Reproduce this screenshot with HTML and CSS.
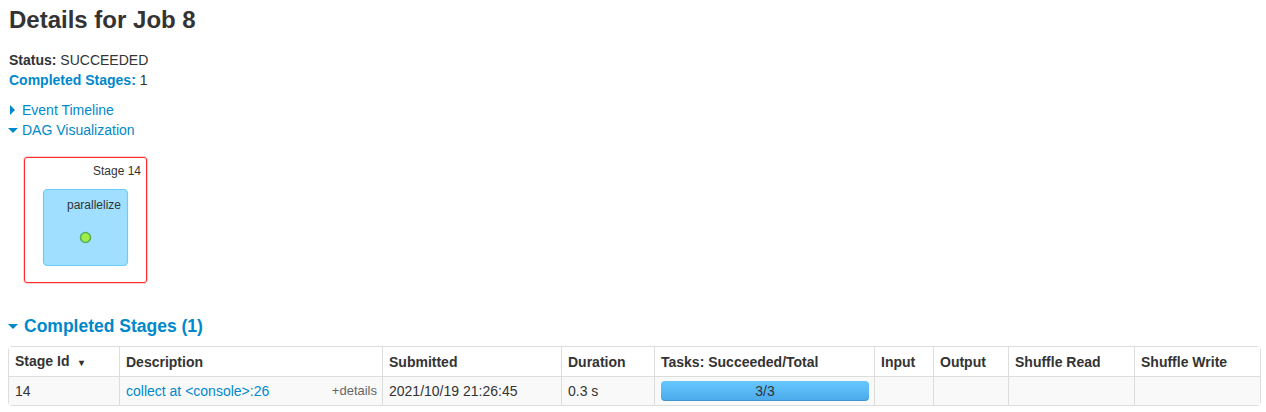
FILE: index.html
```html
<!DOCTYPE html>
<html>
<head>
<meta charset="utf-8">
<link rel="stylesheet" href="styles.css">
</head>
<body>
<div class="page">
  <h3 class="title">Details for Job 8</h3>
  <ul class="summary">
    <li><strong>Status:</strong> SUCCEEDED</li>
    <li><a class="link"><strong>Completed Stages:</strong></a> 1</li>
  </ul>
  <div class="toggles">
    <div class="toggle"><span class="arrow-right"></span><a class="link">Event Timeline</a></div>
    <div class="toggle"><span class="arrow-down"></span><a class="link">DAG Visualization</a></div>
  </div>
  <div class="dag">
    <svg width="150" height="140" viewBox="0 0 150 140">
      <rect x="24.5" y="9.5" width="122" height="125" rx="3" ry="3" fill="none" stroke="#ffd0d4" stroke-width="3"/>
      <rect x="24.5" y="9.5" width="122" height="125" rx="2.5" ry="2.5" fill="#fff" stroke="#ff2a2a" stroke-width="1"/>
      <text x="141" y="27" text-anchor="end" class="svg-label">Stage 14</text>
      <rect x="43.5" y="41.5" width="84" height="76" rx="4" ry="4" fill="#a0dfff" stroke="#68cdf7" stroke-width="1.2"/>
      <text x="121" y="61" text-anchor="end" class="svg-label">parallelize</text>
      <circle cx="85.5" cy="89.5" r="5" fill="#a4ec4a" stroke="#52b05a" stroke-width="1.6"/>
    </svg>
  </div>
  <h4 class="section"><span class="arrow-down big"></span>Completed Stages (1)</h4>
  <table class="stages">
    <colgroup>
      <col class="c1"><col class="c2"><col class="c3"><col class="c4"><col class="c5"><col class="c6"><col class="c7"><col class="c8"><col>
    </colgroup>
    <thead>
      <tr>
        <th>Stage Id <span class="sort">&#9662;</span></th>
        <th>Description</th>
        <th>Submitted</th>
        <th>Duration</th>
        <th>Tasks: Succeeded/Total</th>
        <th>Input</th>
        <th>Output</th>
        <th>Shuffle Read</th>
        <th>Shuffle Write</th>
      </tr>
    </thead>
    <tbody>
      <tr>
        <td>14</td>
        <td><div class="desc"><a class="link">collect at &lt;console&gt;:26</a><span class="details">+details</span></div></td>
        <td>2021/10/19 21:26:45</td>
        <td>0.3 s</td>
        <td><div class="progress"><span>3/3</span></div></td>
        <td></td>
        <td></td>
        <td></td>
        <td></td>
      </tr>
    </tbody>
  </table>
</div>
</body>
</html>
```
FILE: styles.css
```css
html, body {
  margin: 0;
  padding: 0;
  background: #fff;
}
body {
  font-family: "Liberation Sans", Arial, sans-serif;
  font-size: 14px;
  line-height: 20px;
  color: #333;
}
.page {
  padding: 0 5px 0 9px;
}
.title {
  margin: 0;
  font-size: 24px;
  line-height: 40px;
  font-weight: bold;
  color: #333;
}
.summary {
  list-style: none;
  margin: 10px 0 0 0;
  padding: 0;
}
.link {
  color: #0088cc;
  text-decoration: none;
}
.toggles {
  margin-top: 10px;
}
.toggle {
  display: flex;
  align-items: center;
  height: 20px;
}
.arrow-right {
  width: 0;
  height: 0;
  border-top: 5px solid transparent;
  border-bottom: 5px solid transparent;
  border-left: 5px solid #0088cc;
  margin: 0 7px 0 1px;
}
.arrow-down {
  width: 0;
  height: 0;
  border-left: 5px solid transparent;
  border-right: 5px solid transparent;
  border-top: 5px solid #0088cc;
  margin: 0 4px 0 -1px;
}
.arrow-down.big {
  margin: 0 6px 0 -1px;
}
.dag {
  height: 148px;
}
.dag svg {
  display: block;
  margin-left: -9px;
  margin-top: 8px;
}
.svg-label {
  font-family: "Liberation Sans", Arial, sans-serif;
  font-size: 12px;
  fill: #333;
}
.section {
  display: flex;
  align-items: center;
  margin: 20px 0 10px 0;
  font-size: 17.5px;
  line-height: 20px;
  font-weight: bold;
  color: #0088cc;
}
.stages {
  width: 1253px;
  table-layout: fixed;
  border-collapse: separate;
  border-spacing: 0;
  border: 1px solid #ddd;
  border-radius: 4px;
  font-size: 14px;
  margin-left: -1px;
}
.c1 { width: 110px; }
.c2 { width: 263px; }
.c3 { width: 179px; }
.c4 { width: 93px; }
.c5 { width: 220px; }
.c6 { width: 59px; }
.c7 { width: 75px; }
.c8 { width: 126px; }
.stages th, .stages td {
  text-align: left;
  padding: 4px 6px 3px 6px;
  height: 20px;
  line-height: 20px;
  border-left: 1px solid #ddd;
  vertical-align: middle;
  box-sizing: content-box;
}
.stages th:first-child, .stages td:first-child {
  border-left: none;
}
.stages th {
  font-weight: bold;
  background: #fff;
}
.stages td {
  border-top: 1px solid #ddd;
  background: #f9f9f9;
  padding: 4px 6px;
}
.sort {
  font-size: 10px;
  margin-left: 6px;
}
.desc {
  display: flex;
  justify-content: space-between;
  align-items: center;
  height: 20px;
}
.details {
  font-size: 13px;
  color: #666;
  margin-right: -1px;
}
.progress {
  height: 20px;
  border-radius: 4px;
  background: linear-gradient(to bottom, #66c8ff, #4aa9ea);
  box-shadow: inset 0 -1px 0 rgba(0,0,0,0.12);
  text-align: center;
  line-height: 20px;
  font-size: 14px;
  color: #333;
  margin-right: -1px;
}
```
